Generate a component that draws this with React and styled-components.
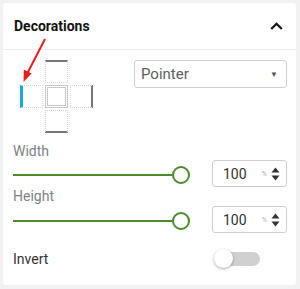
import React from 'react';
import styled, { createGlobalStyle } from 'styled-components';

const GlobalStyle = createGlobalStyle`
  body {
    margin: 0;
    background: #f1f2f3;
    font-family: Roboto, "Liberation Sans", sans-serif;
  }
`;

const Panel = styled.div`
  position: relative;
  margin: 3px;
  width: 293px;
  height: 282px;
  background: #fff;
  border-radius: 3px;
  box-sizing: border-box;
`;

const Header = styled.div`
  height: 47px;
  display: flex;
  align-items: center;
  justify-content: space-between;
  padding: 0 13px 0 11px;
  border-bottom: 1px solid #eeeff0;
  box-sizing: border-box;
`;

const Title = styled.div`
  font-size: 14px;
  font-weight: 700;
  color: #111;
`;

const Body = styled.div`
  padding: 10px 9px 0 10px;
`;

const TopRow = styled.div`
  display: flex;
  justify-content: space-between;
  align-items: flex-start;
`;

const PosGrid = styled.div`
  margin-left: 7px;
  display: grid;
  grid-template-columns: repeat(3, 23px);
  grid-template-rows: repeat(3, 23px);
  gap: 2px;
`;

const Cell = styled.div`
  box-sizing: border-box;
  border: 1px dotted #d4d6d8;
  ${(p) => p.$bar === 'top' && 'border-top: 2px solid #777;'}
  ${(p) => p.$bar === 'bottom' && 'border-bottom: 2px solid #777;'}
  ${(p) => p.$bar === 'right' && 'border-right: 2px solid #777;'}
  ${(p) => p.$bar === 'left' && 'border-left: 3px solid #1aa6e4;'}
`;

const CenterCell = styled.div`
  box-sizing: border-box;
  border: 3px double #c8c8c8;
`;

const Empty = styled.div``;

const Select = styled.div`
  width: 153px;
  height: 28px;
  border: 1px solid #cdd0d3;
  border-radius: 3px;
  box-sizing: border-box;
  display: flex;
  align-items: center;
  justify-content: space-between;
  padding: 0 8px 0 6px;
  font-size: 15px;
  color: #5a5f64;
`;

const Caret = styled.span`
  font-size: 8px;
  color: #555;
`;

const Label = styled.div`
  font-size: 14px;
  line-height: 16px;
  color: #7c8288;
  margin-top: ${(p) => p.$top}px;
`;

const SliderRow = styled.div`
  display: flex;
  align-items: center;
  height: 27px;
  margin-top: ${(p) => p.$top}px;
`;

const Slider = styled.div`
  width: 177px;
  display: flex;
  align-items: center;
  margin-right: 22px;
  margin-top: 2px;
`;

const Track = styled.div`
  flex: 1;
  height: 2px;
  background: #4b8b2c;
`;

const Thumb = styled.div`
  width: 18px;
  height: 18px;
  border: 2px solid #4b8b2c;
  border-radius: 50%;
  box-sizing: border-box;
  background: #fff;
`;

const NumberBox = styled.div`
  width: 75px;
  height: 27px;
  border: 1px solid #cdd0d3;
  border-radius: 3px;
  box-sizing: border-box;
  display: flex;
  align-items: center;
  padding: 0 6px 0 10px;
`;

const NumValue = styled.span`
  font-size: 14px;
  color: #333;
  flex: 1;
`;

const Unit = styled.span`
  font-size: 7px;
  color: #a8b4c0;
  margin-right: 4px;
`;

const ToggleRow = styled.div`
  display: flex;
  align-items: center;
  justify-content: space-between;
  height: 20px;
  margin-top: 16px;
  padding-right: 27px;
`;

const ToggleLabel = styled.div`
  font-size: 14px;
  color: #333;
`;

const Toggle = styled.div`
  position: relative;
  width: 46px;
  height: 14px;
  display: flex;
  align-items: center;
`;

const ToggleTrack = styled.div`
  margin-left: 2px;
  width: 44px;
  height: 14px;
  border-radius: 7px;
  background: #d0d0d0;
`;

const Knob = styled.div`
  position: absolute;
  left: 0;
  top: -3px;
  width: 19px;
  height: 19px;
  border-radius: 50%;
  background: #fff;
  box-shadow: 0 1px 3px rgba(0, 0, 0, 0.35);
`;

const Arrow = styled.svg`
  position: absolute;
  left: 0;
  top: 0;
  pointer-events: none;
`;

const Spinner = () => (
  <svg width="9" height="14" viewBox="0 0 9 14">
    <path d="M4.5 0.5 L8.5 5.5 H0.5 Z" fill="#333" />
    <path d="M4.5 13.5 L8.5 8.5 H0.5 Z" fill="#333" />
  </svg>
);

const NumberField = ({ value }) => (
  <NumberBox>
    <NumValue>{value}</NumValue>
    <Unit>%</Unit>
    <Spinner />
  </NumberBox>
);

const RangeSlider = () => (
  <Slider>
    <Track />
    <Thumb />
  </Slider>
);

export default function App() {
  return (
    <>
      <GlobalStyle />
      <Panel>
        <Header>
          <Title>Decorations</Title>
          <svg width="13" height="8" viewBox="0 0 13 8">
            <path d="M1.2 7 L6.5 1.7 L11.8 7" fill="none" stroke="#111" strokeWidth="2.2" />
          </svg>
        </Header>
        <Body>
          <TopRow>
            <PosGrid>
              <Empty />
              <Cell $bar="top" />
              <Empty />
              <Cell $bar="left" />
              <CenterCell />
              <Cell $bar="right" />
              <Empty />
              <Cell $bar="bottom" />
              <Empty />
            </PosGrid>
            <Select>
              Pointer
              <Caret>▼</Caret>
            </Select>
          </TopRow>
          <Label $top={10}>Width</Label>
          <SliderRow $top={1}>
            <RangeSlider />
            <NumberField value="100" />
          </SliderRow>
          <Label $top={1}>Height</Label>
          <SliderRow $top={2}>
            <RangeSlider />
            <NumberField value="100" />
          </SliderRow>
          <ToggleRow>
            <ToggleLabel>Invert</ToggleLabel>
            <Toggle>
              <ToggleTrack />
              <Knob />
            </Toggle>
          </ToggleRow>
        </Body>
        <Arrow width="60" height="90" viewBox="0 0 60 90">
          <line x1="42" y1="36" x2="24.5" y2="70" stroke="#e3201b" strokeWidth="2" />
          <path d="M20.5 79 L20.8 66.5 L28.6 70.5 Z" fill="#e3201b" />
        </Arrow>
      </Panel>
    </>
  );
}
